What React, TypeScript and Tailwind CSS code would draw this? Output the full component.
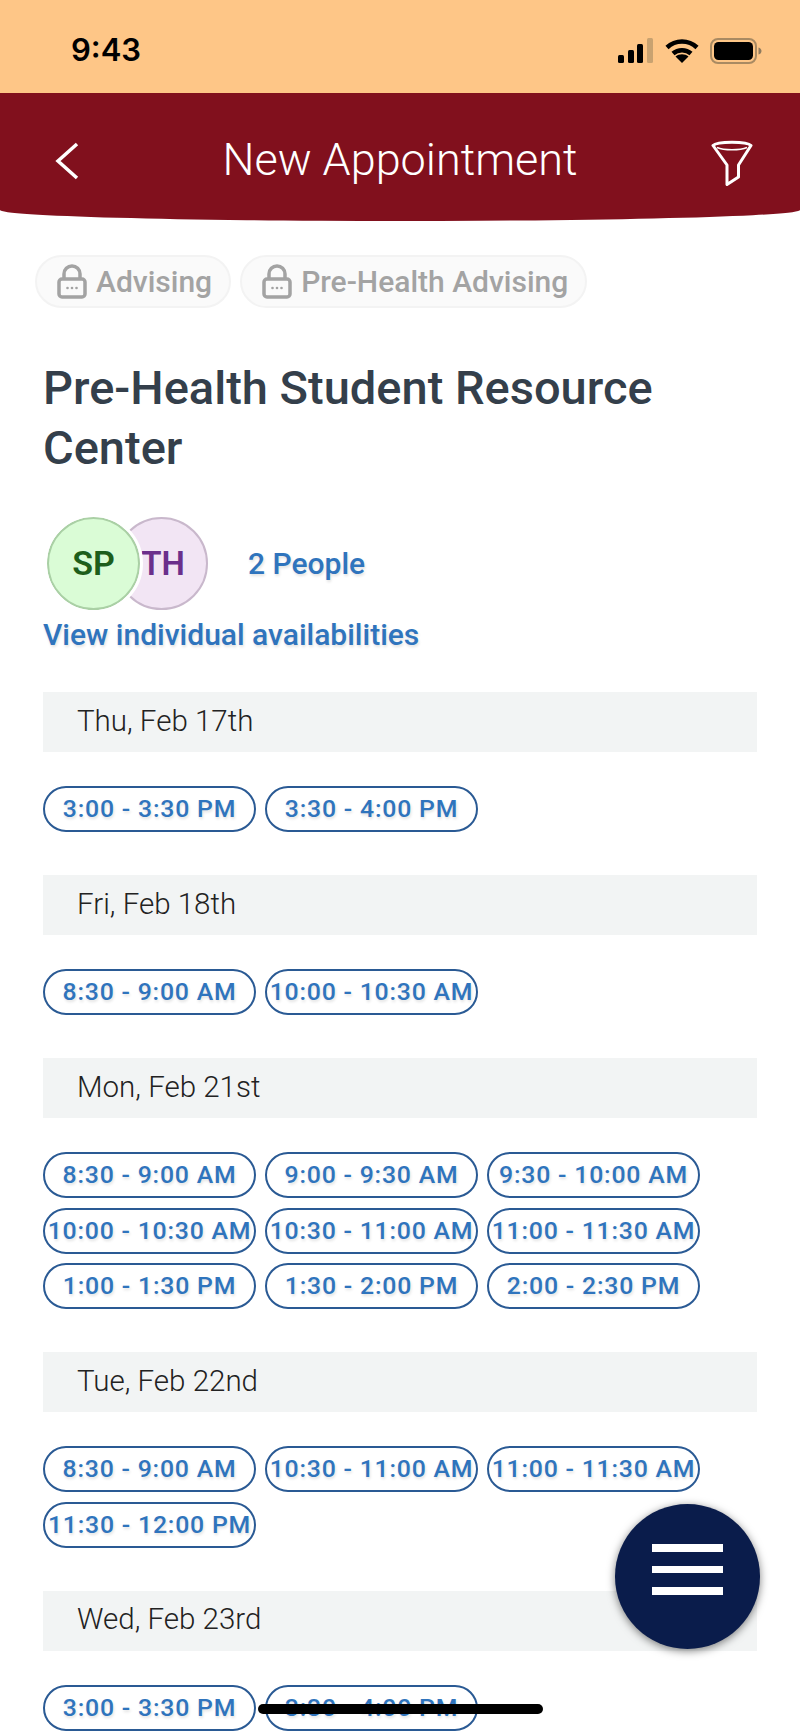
import React from 'react'

interface DaySlots {
  label: string
  slots: string[]
}

const days: DaySlots[] = [
  { label: 'Thu, Feb 17th', slots: ['3:00 - 3:30 PM', '3:30 - 4:00 PM'] },
  { label: 'Fri, Feb 18th', slots: ['8:30 - 9:00 AM', '10:00 - 10:30 AM'] },
  {
    label: 'Mon, Feb 21st',
    slots: [
      '8:30 - 9:00 AM',
      '9:00 - 9:30 AM',
      '9:30 - 10:00 AM',
      '10:00 - 10:30 AM',
      '10:30 - 11:00 AM',
      '11:00 - 11:30 AM',
      '1:00 - 1:30 PM',
      '1:30 - 2:00 PM',
      '2:00 - 2:30 PM'
    ]
  },
  {
    label: 'Tue, Feb 22nd',
    slots: ['8:30 - 9:00 AM', '10:30 - 11:00 AM', '11:00 - 11:30 AM', '11:30 - 12:00 PM']
  },
  { label: 'Wed, Feb 23rd', slots: ['3:00 - 3:30 PM', '3:30 - 4:00 PM'] }
]

const LockIcon = () => (
  <svg width="30" height="35" viewBox="0 0 30 35" fill="none" className="shrink-0">
    <path d="M7 15V10a8 8 0 0 1 16 0v5" stroke="#a3a3a3" strokeWidth="3.500" />
    <rect x="2" y="15" width="26" height="18" rx="3" stroke="#a3a3a3" strokeWidth="3.500" />
    <circle cx="10.500" cy="24" r="1.300" fill="#a3a3a3" />
    <circle cx="15" cy="24" r="1.300" fill="#a3a3a3" />
    <circle cx="19.500" cy="24" r="1.300" fill="#a3a3a3" />
  </svg>
)

const Chip = ({ text }: { text: string }) => (
  <div className="flex h-[53px] items-center gap-[9px] rounded-full border-2 border-[#f3f3f3] bg-[#fafafa] pl-[20px] pr-[17px]">
    <LockIcon />
    <span className="text-[30px] font-medium leading-none text-[#a3a3a3]">{text}</span>
  </div>
)

const SignalIcon = () => (
  <svg width="36" height="25" viewBox="0 0 36 25">
    <rect x="0" y="17" width="6" height="8" rx="1.500" fill="#000" />
    <rect x="10" y="12" width="6" height="13" rx="1.500" fill="#000" />
    <rect x="19" y="6" width="6" height="19" rx="1.500" fill="#000" />
    <rect x="29" y="0" width="6" height="25" rx="1.500" fill="#c9a270" />
  </svg>
)

const WifiIcon = () => (
  <svg width="34" height="25" viewBox="0 0 34 25" fill="none">
    <path d="M2 9.500C10.500 1.500 23.500 1.500 32 9.500" stroke="#000" strokeWidth="4.500" />
    <path d="M8 15.500C13 11 21 11 26 15.500" stroke="#000" strokeWidth="4.500" />
    <path d="M17 25l-6.500-6.500c3.500-3 9.500-3 13 0z" fill="#000" />
  </svg>
)

const BatteryIcon = () => (
  <svg width="52" height="26" viewBox="0 0 52 26" fill="none">
    <rect x="1" y="1" width="45" height="24" rx="7" stroke="#a98a62" strokeWidth="2" />
    <rect x="4" y="4" width="39" height="18" rx="4.500" fill="#000" />
    <path d="M48.500 9.500c2 .5 3 2 3 3.500s-1 3-3 3.500z" fill="#8f7a5e" />
  </svg>
)

const FilterIcon = () => (
  <svg width="42" height="48" viewBox="0 0 42 48" fill="none" stroke="#fff">
    <path d="M2 7.500C6 3 36 3 40 7.500L27.500 27v12L16 46.500V27z" strokeWidth="3" strokeLinejoin="round" />
    <path d="M6 9.500C13 12.500 29 12.500 36 9.500" strokeWidth="1.500" />
  </svg>
)

const TimePill = ({ text }: { text: string }) => (
  <div className="flex h-[46px] w-[213px] items-center justify-center whitespace-nowrap rounded-full border-2 border-[#2a5a94] text-[24.800px] font-medium tracking-[0.8px] text-[#2f74bd] [text-shadow:1px_2px_3px_rgba(0,0,0,0.12)]">
    {text}
  </div>
)

export default function App() {
  return (
    <div className="relative h-[1731px] w-[800px] overflow-hidden bg-white font-['Roboto',sans-serif]">
      {/* status bar */}
      <div className="flex h-[93px] items-center justify-between bg-[#fec687] pl-[71px] pr-[38px] pt-[8px]">
        <span className="font-['Inter',sans-serif] text-[31px] font-semibold text-black">9:43</span>
        <div className="flex items-center gap-[11px]">
          <SignalIcon />
          <WifiIcon />
          <BatteryIcon />
        </div>
      </div>

      {/* header */}
      <div className="flex h-[128px] items-start justify-between rounded-b-[400px_11px] bg-[#81101d] pl-[55px] pr-[47px] pt-[45px]">
        <svg width="24" height="38" viewBox="0 0 24 38" fill="none" className="mt-[4px]">
          <path d="M22 2L3 19l19 17" stroke="#fff" strokeWidth="3.500" />
        </svg>
        <span className="ml-[10px] mt-[-8px] text-[45px] font-light leading-[60px] text-white">New Appointment</span>
        <FilterIcon />
      </div>

      {/* chips */}
      <div className="ml-[35px] mt-[34px] flex gap-[9px]">
        <Chip text="Advising" />
        <Chip text="Pre-Health Advising" />
      </div>

      <div className="px-[43px]">
        <h1 className="mt-[50px] text-[47px] font-medium leading-[60px] text-[#343f4b]">
          Pre-Health Student Resource Center
        </h1>

        {/* people */}
        <div className="mt-[39px] flex items-center pl-[4px]">
          <div className="relative h-[93px] w-[161px]">
            <div className="absolute left-[68px] top-0 flex h-[93px] w-[93px] items-center justify-center rounded-full border-2 border-[#c9b8cc] bg-[#f2e5f4] pl-[3px] text-[33px] font-semibold text-[#6b2f8b]">
              TH
            </div>
            <div className="absolute left-0 top-0 flex h-[93px] w-[93px] items-center justify-center rounded-full border-2 border-[#aad0a5] bg-[#dafcd6] text-[34px] font-semibold text-[#1d5e1b] outline-3 outline-white">
              SP
            </div>
          </div>
          <span className="ml-[40px] text-[30px] font-medium text-[#2f74bd] [text-shadow:1px_2px_3px_rgba(0,0,0,0.12)]">
            2 People
          </span>
        </div>
        <div className="mt-[5px] text-[30px] font-medium leading-[40px] text-[#2f74bd] [text-shadow:1px_2px_3px_rgba(0,0,0,0.12)]">
          View individual availabilities
        </div>

        {/* days */}
        <div className="mt-[37px] flex flex-col gap-[43px]">
          {days.map((day) => (
            <div key={day.label}>
              <div className="flex h-[60px] items-center bg-[#f2f4f4] pb-[2px] pl-[34px] text-[29.500px] font-light text-[#222]">
                {day.label}
              </div>
              <div className="mt-[34px] flex flex-wrap gap-x-[9px] gap-y-[9.500px]">
                {day.slots.map((slot) => (
                  <TimePill key={slot} text={slot} />
                ))}
              </div>
            </div>
          ))}
        </div>
      </div>

      {/* floating menu button */}
      <div className="absolute left-[615px] top-[1504px] flex h-[145px] w-[145px] flex-col items-center justify-start gap-[14px] rounded-full bg-[#0a1c4b] pt-[40px] shadow-[0_2px_8px_rgba(0,0,0,0.5)]">
        <div className="h-[7.500px] w-[71px] bg-white" />
        <div className="h-[7.500px] w-[71px] bg-white" />
        <div className="h-[7.500px] w-[71px] bg-white" />
      </div>

      {/* home indicator */}
      <div className="absolute left-[258px] top-[1704px] h-[10px] w-[285px] rounded-full bg-black" />
    </div>
  )
}
